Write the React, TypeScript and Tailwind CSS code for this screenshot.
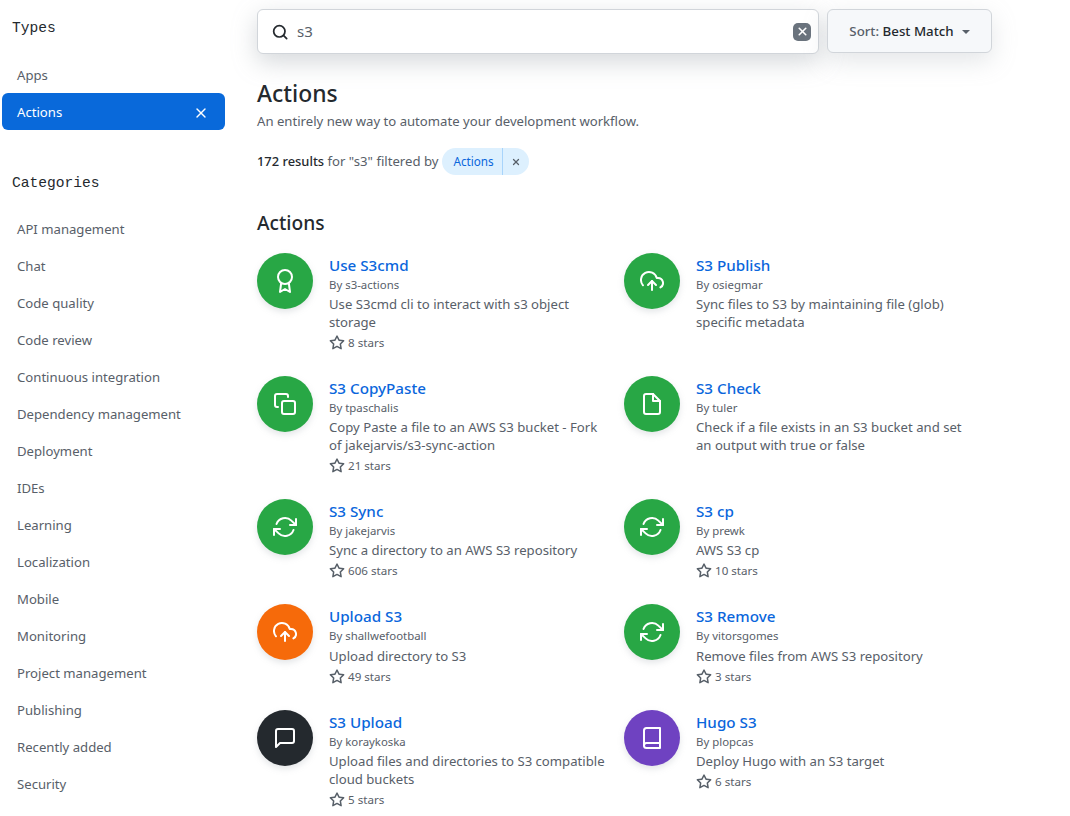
import React from "react";
import { X } from "lucide-react";

type IconName = "award" | "cloud" | "copy" | "file" | "sync" | "message" | "book";

type Action = {
  name: string;
  by: string;
  desc: string;
  stars: string;
  icon: IconName;
  color: string;
};

const categories = [
  "API management",
  "Chat",
  "Code quality",
  "Code review",
  "Continuous integration",
  "Dependency management",
  "Deployment",
  "IDEs",
  "Learning",
  "Localization",
  "Mobile",
  "Monitoring",
  "Project management",
  "Publishing",
  "Recently added",
  "Security",
];

const actions: Action[] = [
  { name: "Use S3cmd", by: "s3-actions", desc: "Use S3cmd cli to interact with s3 object storage", stars: "8 stars", icon: "award", color: "bg-[#28a745]" },
  { name: "S3 Publish", by: "osiegmar", desc: "Sync files to S3 by maintaining file (glob) specific metadata", stars: "", icon: "cloud", color: "bg-[#28a745]" },
  { name: "S3 CopyPaste", by: "tpaschalis", desc: "Copy Paste a file to an AWS S3 bucket - Fork of jakejarvis/s3-sync-action", stars: "21 stars", icon: "copy", color: "bg-[#28a745]" },
  { name: "S3 Check", by: "tuler", desc: "Check if a file exists in an S3 bucket and set an output with true or false", stars: "", icon: "file", color: "bg-[#28a745]" },
  { name: "S3 Sync", by: "jakejarvis", desc: "Sync a directory to an AWS S3 repository", stars: "606 stars", icon: "sync", color: "bg-[#28a745]" },
  { name: "S3 cp", by: "prewk", desc: "AWS S3 cp", stars: "10 stars", icon: "sync", color: "bg-[#28a745]" },
  { name: "Upload S3", by: "shallwefootball", desc: "Upload directory to S3", stars: "49 stars", icon: "cloud", color: "bg-[#f66a0a]" },
  { name: "S3 Remove", by: "vitorsgomes", desc: "Remove files from AWS S3 repository", stars: "3 stars", icon: "sync", color: "bg-[#28a745]" },
  { name: "S3 Upload", by: "koraykoska", desc: "Upload files and directories to S3 compatible cloud buckets", stars: "5 stars", icon: "message", color: "bg-[#24292e]" },
  { name: "Hugo S3", by: "plopcas", desc: "Deploy Hugo with an S3 target", stars: "6 stars", icon: "book", color: "bg-[#6f42c1]" },
];

function ActionIcon({ name }: { name: IconName }) {
  return (
    <svg width="24" height="24" viewBox="0 0 24 24" fill="none" stroke="white" strokeWidth="2" strokeLinecap="round" strokeLinejoin="round">
      {name === "award" && (
        <>
          <circle cx="12" cy="8" r="7" />
          <polyline points="8.21 13.89 7 23 12 20 17 23 15.79 13.88" />
        </>
      )}
      {name === "cloud" && (
        <>
          <polyline points="16 16 12 12 8 16" />
          <line x1="12" y1="12" x2="12" y2="21" />
          <path d="M20.39 18.39A5 5 0 0 0 18 9h-1.26A8 8 0 1 0 3 16.3" />
        </>
      )}
      {name === "copy" && (
        <>
          <rect x="9" y="9" width="13" height="13" rx="2" ry="2" />
          <path d="M5 15H4a2 2 0 0 1-2-2V4a2 2 0 0 1 2-2h9a2 2 0 0 1 2 2v1" />
        </>
      )}
      {name === "file" && (
        <>
          <path d="M13 2H6a2 2 0 0 0-2 2v16a2 2 0 0 0 2 2h12a2 2 0 0 0 2-2V9z" />
          <polyline points="13 2 13 9 20 9" />
        </>
      )}
      {name === "sync" && (
        <>
          <polyline points="23 4 23 10 17 10" />
          <polyline points="1 20 1 14 7 14" />
          <path d="M3.51 9a9 9 0 0 1 14.85-3.36L23 10M1 14l4.64 4.36A9 9 0 0 0 20.49 15" />
        </>
      )}
      {name === "message" && <path d="M21 15a2 2 0 0 1-2 2H7l-4 4V5a2 2 0 0 1 2-2h14a2 2 0 0 1 2 2z" />}
      {name === "book" && (
        <>
          <path d="M4 19.5A2.5 2.5 0 0 1 6.5 17H20" />
          <path d="M6.5 2H20v20H6.5A2.5 2.5 0 0 1 4 19.5v-15A2.5 2.5 0 0 1 6.5 2z" />
        </>
      )}
    </svg>
  );
}

function StarIcon() {
  return (
    <svg width="16" height="16" viewBox="0 0 16 16" fill="#586069">
      <path d="M8 .25a.75.75 0 0 1 .673.418l1.882 3.815 4.21.612a.75.75 0 0 1 .416 1.279l-3.046 2.97.719 4.192a.751.751 0 0 1-1.088.791L8 12.347l-3.766 1.98a.75.75 0 0 1-1.088-.79l.72-4.194L.818 6.374a.75.75 0 0 1 .416-1.28l4.21-.611L7.327.668A.75.75 0 0 1 8 .25Zm0 2.445L6.615 5.5a.75.75 0 0 1-.564.41l-3.097.45 2.24 2.184a.75.75 0 0 1 .216.664l-.528 3.084 2.769-1.456a.75.75 0 0 1 .698 0l2.77 1.456-.53-3.084a.75.75 0 0 1 .216-.664l2.24-2.183-3.096-.45a.75.75 0 0 1-.564-.41L8 2.694Z" />
    </svg>
  );
}

function ActionCard({ item }: { item: Action }) {
  return (
    <div className="flex gap-4">
      <div className={`w-14 h-14 shrink-0 rounded-full flex items-center justify-center shadow-[0_3px_6px_rgba(149,157,165,0.25)] ${item.color}`}>
        <ActionIcon name={item.icon} />
      </div>
      <div className="w-[280px]">
        <div className="text-[15.2px] leading-6 font-medium text-[#0a66dc]">{item.name}</div>
        <div className="-mt-[1px] text-[11.4px] leading-[18px] text-[#586069]">By {item.by}</div>
        <p className="mt-[2.5px] text-[13.15px] leading-[17.5px] text-[#586069]">{item.desc}</p>
        {item.stars && (
          <div className="mt-[1.5px] flex items-center gap-[3px] text-[11.6px] leading-[20px] text-[#586069]">
            <StarIcon />
            <span>{item.stars}</span>
          </div>
        )}
      </div>
    </div>
  );
}

export default function App() {
  return (
    <div className="flex w-[1070px] h-[816px] overflow-hidden bg-white font-['Noto_Sans',sans-serif] text-[#24292e]">
      <aside className="w-[223px] ml-[2px] shrink-0 pt-[19px]">
        <h2 className="px-[10px] font-['Liberation_Mono',monospace] text-[14.6px] leading-[18px]">Types</h2>
        <ul className="mt-[19px] text-[13.15px] text-[#586069]">
          <li className="h-[37px] px-[15px] pt-[2px] flex items-center">Apps</li>
          <li className="h-[37px] px-[15px] pt-[2px] flex items-center justify-between rounded-md bg-[#0969da] text-white">
            Actions
            <X size={16} strokeWidth={2} className="mr-[1px]" />
          </li>
        </ul>
        <h2 className="mt-[44px] px-[10px] font-['Liberation_Mono',monospace] text-[14.6px] leading-[18px]">Categories</h2>
        <ul className="mt-[19px] text-[13.15px] text-[#586069]">
          {categories.map((c) => (
            <li key={c} className="h-[37px] px-[15px] flex items-center">{c}</li>
          ))}
        </ul>
      </aside>

      <main className="ml-[32px] flex-1 pt-[9px]">
        <div className="flex gap-2 items-start">
          <div className="w-[562px] h-[45px] pl-[14px] pr-[7px] flex items-center rounded-md border border-[#d1d5da] bg-white shadow-[0_8px_24px_rgba(149,157,165,0.4)]">
            <svg width="16" height="16" viewBox="0 0 24 24" fill="none" stroke="#24292e" strokeWidth="2.6" strokeLinecap="round">
              <circle cx="11" cy="11" r="8.5" />
              <line x1="22" y1="22" x2="17.2" y2="17.2" />
            </svg>
            <span className="ml-[9px] flex-1 text-[15px] text-[#586069]">s3</span>
            <span className="w-[18px] h-[18px] rounded-[5px] bg-[#6a737d] flex items-center justify-center">
              <X size={13} strokeWidth={3} color="white" />
            </span>
          </div>
          <div className="w-[165px] h-[44px] pt-[1px] flex items-center justify-center gap-2 rounded-md border border-[#d1d5da] bg-[#f6f8fa] text-[13.3px] font-medium shadow-[0_8px_24px_rgba(149,157,165,0.25)]">
            <span>
              <span className="text-[#586069]">Sort: </span>Best Match
            </span>
            <span className="w-0 h-0 border-x-[4px] border-x-transparent border-t-[4px] border-t-[#586069]" />
          </div>
        </div>

        <h1 className="mt-[24px] text-[22.9px] leading-[32px] font-medium">Actions</h1>
        <p className="mt-[1px] text-[13.15px] leading-[21px] text-[#586069]">An entirely new way to automate your development workflow.</p>

        <div className="mt-[16px] flex items-center text-[13.15px] text-[#586069]">
          <span>
            <strong className="text-[12.9px] font-medium text-[#24292e]">172 results</strong> for "s3" filtered by
          </span>
          <span className="ml-[4px] h-[27px] flex items-center rounded-full bg-[#ddf0fe] text-[11.7px] text-[#0a66dc]">
            <span className="pl-[11px] pr-[8px] leading-[27px] border-r border-[#a8d4fb]">Actions</span>
            <X size={10} strokeWidth={3} className="mx-[8px] text-[#586069]" />
          </span>
        </div>

        <h2 className="mt-[35px] text-[19.2px] leading-[26px] font-medium">Actions</h2>

        <div className="mt-[16.75px] grid grid-cols-[367px_367px] gap-y-[23px]">
          {actions.map((a) => (
            <ActionCard key={a.name} item={a} />
          ))}
        </div>
      </main>
    </div>
  );
}
